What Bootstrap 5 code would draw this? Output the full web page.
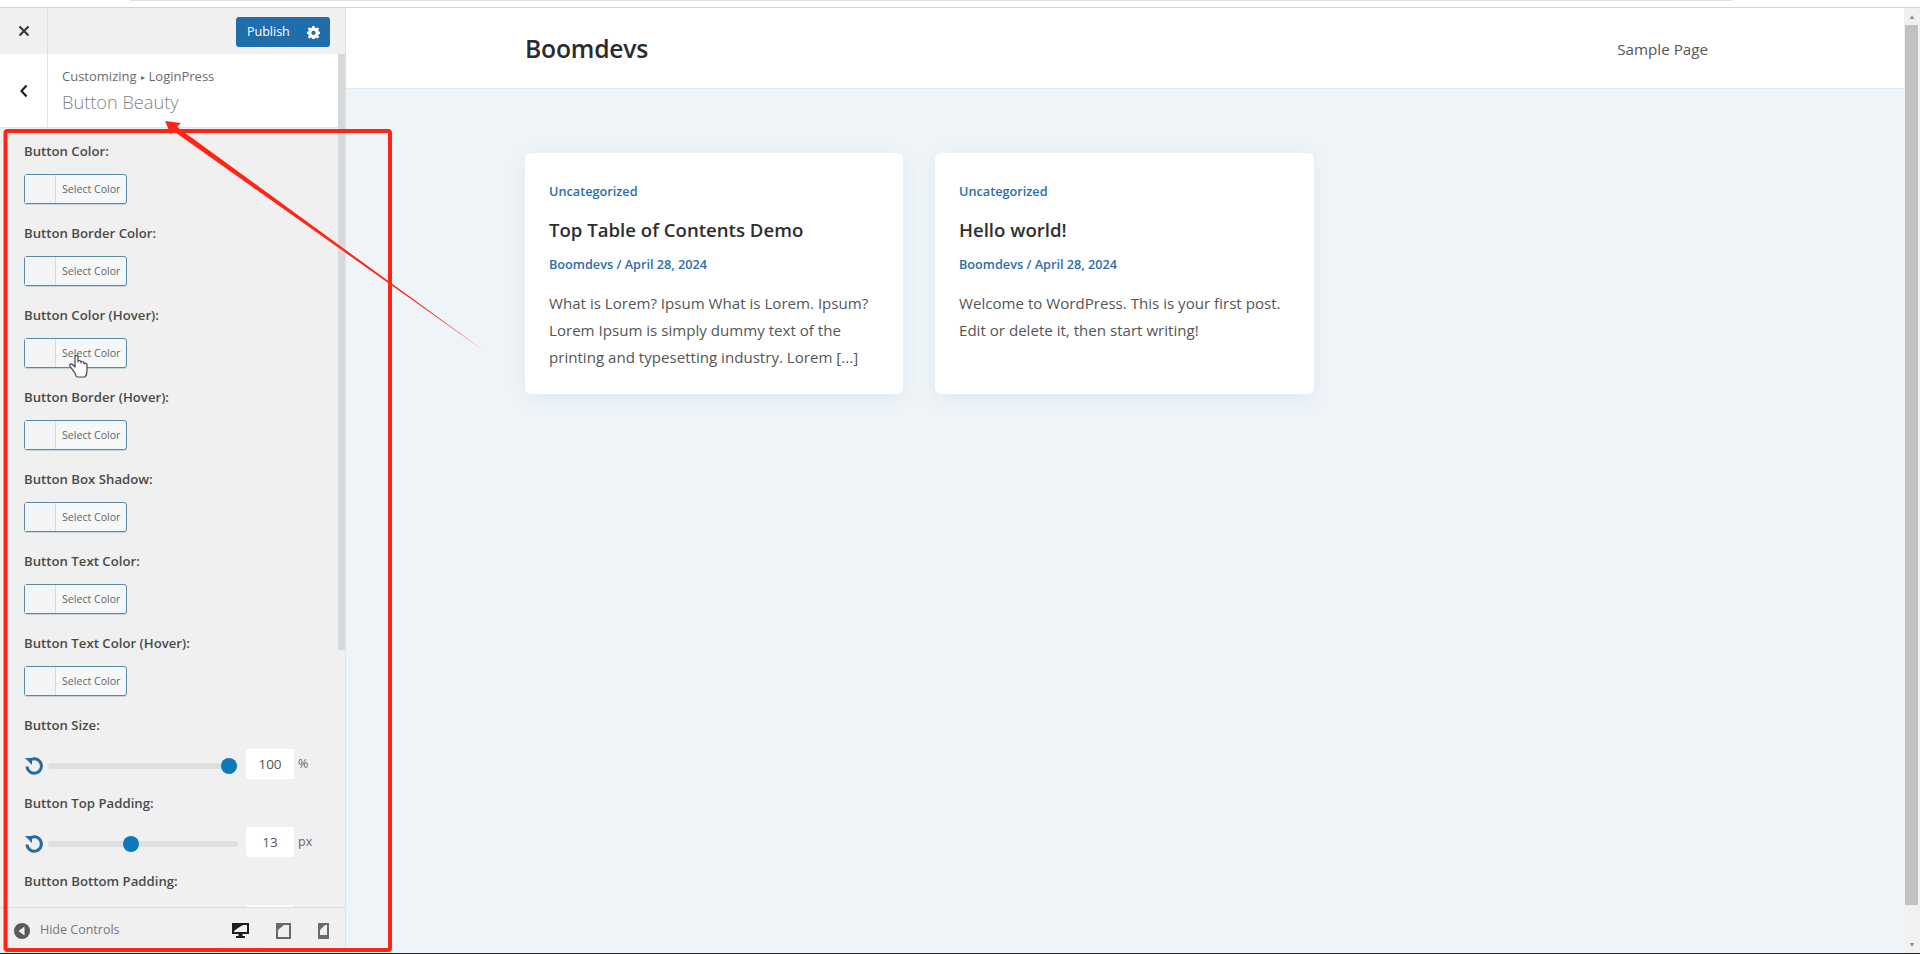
<!DOCTYPE html>
<html lang="en">
<head>
    <meta charset="UTF-8">
    <meta name="viewport" content="width=device-width, initial-scale=1.0">
    <title>Button Beauty - Customizer</title>
    <link href="https://cdn.jsdelivr.net/npm/bootstrap@5.3.0/dist/css/bootstrap.min.css" rel="stylesheet">
    <style>
        html, body { height: 100%; overflow: hidden; }
        body {
            font-family: "Open Sans", "Noto Sans", sans-serif;
            background-color: #fff;
            color: #444;
        }
        .top-strip { height: 8px; border-bottom: 1px solid #d4d4d4; background: #fff; }
        .top-strip-tab { height: 1px; margin-left: 130px; width: 1603px; background: #e2e2e2; }
        .frame { height: 946px; border-bottom: 1px solid #222; }

        /* customizer sidebar */
        .side-panel { width: 346px; background: #f0f0f0; position: relative; border-right: 1px solid #e2e2e2; }
        .side-head { height: 46px; }
        .close-box { width: 48px; border-right: 1px solid #ddd; color: #333; }
        .btn-publish {
            width: 94px; height: 30px; padding: 0 10px 0 11px; border-radius: 3px;
            background: #1f6dab; color: #fff; font-size: 12.5px; border: none;
            margin: 2px 15px 0 0;
        }
        .section-head { height: 74px; background: #fff; border-bottom: 1px solid #e4e4e4; margin-right: 6px; }
        .back-box { width: 48px; border-right: 1px solid #e4e4e4; color: #222; }
        .section-txt { padding-left: 14px; }
        .crumb { font-size: 13px; color: #6b6b6b; line-height: 17px; padding-top: 14px; }
        .crumb-arrow { font-size: 8px; margin: 0 4px; vertical-align: 1px; }
        .section-title { font-size: 18.2px; color: #858585; line-height: 26px; margin-top: 4px; font-weight: 300; }
        .side-scroll { position: absolute; right: 0; top: 46px; width: 7px; height: 596px; background: #d5d9d9; }

        .controls { padding: 13px 0 0 24px; overflow: hidden; min-height: 0; }
        .ctl-label { font-size: 13.2px; font-weight: 600; color: #4a4a4a; line-height: 20px; height: 20px; white-space: nowrap; }
        .color-group { height: 82px; }
        .color-pick {
            display: flex; width: 103px; height: 30px; margin-top: 13px; padding: 0;
            background: #f5f7f8; border: 1px solid #5a89a6; border-radius: 3px;
            box-shadow: 0 1px 0 #c5d4dd;
        }
        .color-well { width: 31px; height: 100%; border-right: 1px solid #d5d9dc; background: #f3f4f5; }
        .color-text { font-size: 10.6px; color: #666; line-height: 28px; padding-left: 6px; white-space: nowrap; }
        .range-group { height: 78px; }
        .range-row { margin-top: 14px; height: 30px; }
        .reset-ico { width: 20px; height: 20px; margin: 3px 4px 0 0; flex-shrink: 0; }
        .range-track { width: 190px; height: 6px; margin-top: 3px; border-radius: 3px; background: #dce0e1; position: relative; flex-shrink: 0; }
        .range-dot {
            position: absolute; top: -5px; width: 16px; height: 16px; border-radius: 50%;
            background: #0b79ba;
        }
        .num-box {
            width: 48px; height: 30px; margin-left: 8px; background: #fff; border-radius: 2px;
            font-size: 13.5px; color: #555; text-align: center; line-height: 30px; flex-shrink: 0;
        }
        .num-unit { font-size: 12.5px; color: #666; margin-left: 4px; }

        .side-foot { height: 46px; border-top: 1px solid #ddd; background: #f0f0f0; position: relative; padding-left: 14px; padding-right: 16px; }
        .hide-txt { font-size: 12.5px; color: #777; margin-left: 10px; }
        .device-ico-wrap { gap: 27px; }
        .device-active { position: absolute; left: 218px; bottom: 5px; width: 44px; height: 1px; background: #fafafa; }

        /* site preview */
        .preview { background: #eef4f8; min-width: 0; }
        .site-bar { height: 81px; background: #fff; border-bottom: 1px solid #e6ebee; padding: 2px 196px 0 179px; }
        .site-name { font-size: 24.7px; font-weight: 600; color: #2b2b2b; letter-spacing: -.2px; }
        .site-link { font-size: 15.2px; color: #555; }
        .post-list { padding: 64px 0 0 179px; gap: 32px; }
        .post-box {
            width: 378px; height: 241px; background: #fff; border-radius: 6px; padding: 28px 24px 0;
            box-shadow: 0 4px 18px rgba(90, 120, 140, .08);
        }
        .post-box + .post-box { width: 379px; }
        .post-cat, .post-meta { font-size: 12.7px; font-weight: 600; color: #2a6eaf; line-height: 20px; }
        .post-title { font-size: 18.6px; font-weight: 600; color: #2e2e2e; line-height: 26px; margin: 16px 0 11px; }
        .post-text { font-size: 15.1px; color: #555; line-height: 27px; margin-top: 16px; white-space: nowrap; }

        .page-scroll { width: 16px; background: #f1f1f1; }
        .scroll-arrow { height: 17px; color: #8f8f8f; font-size: 7px; line-height: 17px; text-align: center; }
        .scroll-thumb { height: 880px; margin: 0 2px 0 1px; background: #c1c1c1; }

        .overlay { position: absolute; left: 0; top: 0; pointer-events: none; }
    </style>
</head>
<body>

<div class="top-strip"><div class="top-strip-tab"></div></div>

<div class="frame d-flex">
    <!-- customizer controls -->
    <div class="side-panel d-flex flex-column flex-shrink-0">
        <div class="side-head d-flex justify-content-between align-items-stretch flex-shrink-0">
            <div class="close-box d-flex align-items-center justify-content-center">
                <svg width="12" height="12" viewBox="0 0 12 12"><path d="M1.500 1.500l9 9M10.500 1.500l-9 9" stroke="#333" stroke-width="2" fill="none"/></svg>
            </div>
            <div class="d-flex align-items-center">
                <button class="btn-publish d-flex align-items-center justify-content-between" type="button">
                    <span>Publish</span>
                    <svg width="13" height="13" viewBox="0 0 16 16"><path fill="#fff" fill-rule="evenodd" d="M6.600 0h2.800l.4 2.200 1.300.6L13 1.500l2 2-1.300 1.900.6 1.300 2.200.4v2.800l-2.200.4-.6 1.300 1.300 1.900-2 2-1.900-1.300-1.300.6-.4 2.200H6.600l-.4-2.200-1.300-.6L3 15.500l-2-2 1.300-1.900-.6-1.300L-.5 9.900V7.100l2.200-.4.6-1.300L1 3.500l2-2 1.900 1.300 1.300-.6zM8 5.900a2.600 2.600 0 1 0 0 5.200a2.600 2.600 0 0 0 0-5.200z"/></svg>
                </button>
            </div>
        </div>

        <div class="section-head d-flex flex-shrink-0">
            <div class="back-box d-flex align-items-center justify-content-center">
                <svg width="10" height="14" viewBox="0 0 10 14"><path d="M7.500 1.500L2.500 7l5 5.500" stroke="#222" stroke-width="2.200" fill="none"/></svg>
            </div>
            <div class="section-txt">
                <div class="crumb">Customizing<span class="crumb-arrow">&#9656;</span>LoginPress</div>
                <div class="section-title">Button Beauty</div>
            </div>
        </div>

        <div class="controls flex-grow-1">
            <div class="color-group"><div class="ctl-label">Button Color:</div><button class="color-pick" type="button"><span class="color-well"></span><span class="color-text">Select Color</span></button></div>
            <div class="color-group"><div class="ctl-label">Button Border Color:</div><button class="color-pick" type="button"><span class="color-well"></span><span class="color-text">Select Color</span></button></div>
            <div class="color-group"><div class="ctl-label">Button Color (Hover):</div><button class="color-pick" type="button"><span class="color-well"></span><span class="color-text">Select Color</span></button></div>
            <div class="color-group"><div class="ctl-label">Button Border (Hover):</div><button class="color-pick" type="button"><span class="color-well"></span><span class="color-text">Select Color</span></button></div>
            <div class="color-group"><div class="ctl-label">Button Box Shadow:</div><button class="color-pick" type="button"><span class="color-well"></span><span class="color-text">Select Color</span></button></div>
            <div class="color-group"><div class="ctl-label">Button Text Color:</div><button class="color-pick" type="button"><span class="color-well"></span><span class="color-text">Select Color</span></button></div>
            <div class="color-group"><div class="ctl-label">Button Text Color (Hover):</div><button class="color-pick" type="button"><span class="color-well"></span><span class="color-text">Select Color</span></button></div>

            <div class="range-group">
                <div class="ctl-label">Button Size:</div>
                <div class="range-row d-flex align-items-center">
                    <svg class="reset-ico" viewBox="0 0 20 20"><path d="M5 5a7.200 7.200 0 1 1-2 5.500" stroke="#2a6b9f" stroke-width="3" fill="none"/><path d="M1 2h7v7z" fill="#2a6b9f"/></svg>
                    <div class="range-track"><div class="range-dot" style="left: 173px"></div></div>
                    <div class="num-box">100</div><span class="num-unit">%</span>
                </div>
            </div>
            <div class="range-group">
                <div class="ctl-label">Button Top Padding:</div>
                <div class="range-row d-flex align-items-center">
                    <svg class="reset-ico" viewBox="0 0 20 20"><path d="M5 5a7.200 7.200 0 1 1-2 5.500" stroke="#2a6b9f" stroke-width="3" fill="none"/><path d="M1 2h7v7z" fill="#2a6b9f"/></svg>
                    <div class="range-track"><div class="range-dot" style="left: 75px"></div></div>
                    <div class="num-box">13</div><span class="num-unit">px</span>
                </div>
            </div>
            <div class="range-group">
                <div class="ctl-label">Button Bottom Padding:</div>
                <div class="range-row d-flex align-items-center">
                    <svg class="reset-ico" viewBox="0 0 20 20"></svg>
                    <div class="range-track"></div>
                    <div class="num-box"></div>
                </div>
            </div>
        </div>

        <div class="side-foot d-flex align-items-center flex-shrink-0">
            <svg width="16" height="16" viewBox="0 0 16 16"><circle cx="8" cy="8" r="8" fill="#5a5a5a"/><path d="M10.500 3.500v9L4.500 8z" fill="#f0f0f0"/></svg>
            <span class="hide-txt">Hide Controls</span>
            <div class="device-ico-wrap d-flex align-items-center ms-auto">
                <svg width="17" height="17" viewBox="0 0 17 17"><path fill="#1d1d1d" fill-rule="evenodd" d="M0 1h17v11H10.500v2H13v2H4v-2h2.500v-2H0zm2 2v7h13V3z"/><path fill="#1d1d1d" d="M2 3h9L6 6 2 9z"/></svg>
                <svg width="15" height="17" viewBox="0 0 15 17"><path fill="#6a6a6a" fill-rule="evenodd" d="M0 1h15v16H0zm2 2v12h11V3z"/><path fill="#6a6a6a" d="M2 3h6L2 8z"/></svg>
                <svg width="11" height="17" viewBox="0 0 11 17"><path fill="#6a6a6a" fill-rule="evenodd" d="M0 1h11v16H0zm2 2v10h7V3z"/><path fill="#6a6a6a" d="M2 3h5L2 8z"/></svg>
            </div>
            <div class="device-active"></div>
        </div>
        <div class="side-scroll"></div>
    </div>

    <!-- site preview -->
    <div class="preview flex-grow-1 d-flex flex-column">
        <div class="site-bar d-flex justify-content-between align-items-center">
            <span class="site-name">Boomdevs</span>
            <span class="site-link">Sample Page</span>
        </div>
        <div class="post-list d-flex">
            <div class="post-box">
                <div class="post-cat">Uncategorized</div>
                <div class="post-title">Top Table of Contents Demo</div>
                <div class="post-meta">Boomdevs / April 28, 2024</div>
                <div class="post-text">What is Lorem? Ipsum What is Lorem. Ipsum?<br>Lorem Ipsum is simply dummy text of the<br>printing and typesetting industry. Lorem [...]</div>
            </div>
            <div class="post-box">
                <div class="post-cat">Uncategorized</div>
                <div class="post-title">Hello world!</div>
                <div class="post-meta">Boomdevs / April 28, 2024</div>
                <div class="post-text">Welcome to WordPress. This is your first post.<br>Edit or delete it, then start writing!</div>
            </div>
        </div>
    </div>
    <div class="page-scroll d-flex flex-column justify-content-between flex-shrink-0">
        <div>
            <div class="scroll-arrow">&#9650;</div>
            <div class="scroll-thumb"></div>
        </div>
        <div class="scroll-arrow">&#9660;</div>
    </div>
</div>

<!-- tutorial annotation and mouse pointer drawn over the screenshot -->
<svg class="overlay" width="1920" height="954" viewBox="0 0 1920 954">
    <rect x="5.500" y="131" width="384.500" height="819" rx="2" fill="none" stroke="#ff2415" stroke-width="4"/>
    <path fill="#ff2415" d="M165 121L181 123 177 127 483 350 172 130 171 135z"/>
    <path transform="translate(0 2)" fill="#fff" stroke="#444" stroke-width="1.200" stroke-linejoin="round" d="M75 371c-2-3-4-5-5-7-1-2 1-3 3-1l2 2v-10c0-2 3-2 3 0v5c0-2 3-2 3 0v1c0-2 3-2 3 0v1c0-1 3-1 3 1v6c0 3-1 5-2 6h-8c-1 0-1-2-2-4z"/>
</svg>

<script src="https://cdn.jsdelivr.net/npm/bootstrap@5.3.0/dist/js/bootstrap.bundle.min.js"></script>
</body>
</html>
